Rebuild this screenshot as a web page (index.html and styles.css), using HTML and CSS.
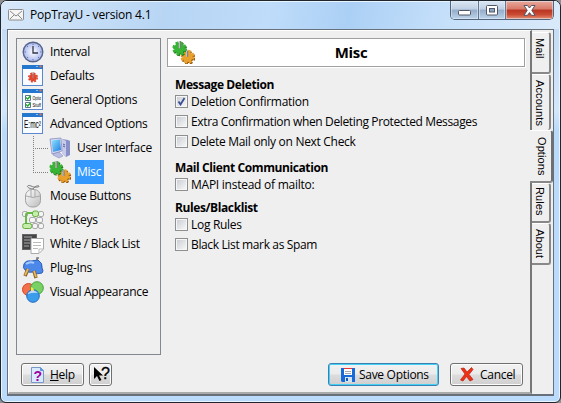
FILE: index.html
```
<!DOCTYPE html>
<html lang="en">
<head>
<meta charset="utf-8">
<title>PopTrayU - version 4.1</title>
<link rel="stylesheet" href="styles.css">
</head>
<body>
<svg class="defs" width="0" height="0" aria-hidden="true">
  <defs>
    <linearGradient id="blue" x2="1" y2="1"><stop stop-color="#8fe3ff"/><stop offset="1" stop-color="#217ce0"/></linearGradient>
    <radialGradient id="face"><stop stop-color="#fff"/><stop offset="1" stop-color="#a9b8ee"/></radialGradient>
    <linearGradient id="mouse" x2="1" y2="1"><stop stop-color="#fff"/><stop offset="1" stop-color="#bbb"/></linearGradient>
    <g id="frame"><rect x=".5" y=".5" width="20" height="20" fill="#f8fbff" stroke="#5b87cf"/><rect width="21" height="4" fill="#2477cf"/><path d="M14 1.500h2" stroke="#79c5fa"/><path d="M17.500 1.500h2" stroke="#f06a54" stroke-width="2"/></g>
    <g id="cog"><circle r="5" fill="currentColor"/><circle r="5.600" fill="none" stroke="currentColor" stroke-width="2.200" stroke-dasharray="2.600 1.800"/></g>
    <symbol id="gears" viewBox="0 0 22 22"><g transform="translate(15.500 16)" color="#95570d"><use href="#cog"/></g><g transform="translate(14.800 15)" color="#e9a02c"><use href="#cog"/></g><g transform="translate(7.800 8)" color="#247b23"><use href="#cog"/></g><g transform="translate(7 7)" color="#39b536"><use href="#cog"/></g><path d="M7.500 0v7M14.500 9v6" stroke="#777" stroke-width="2"/><path d="M7 0v7M14 9v6" stroke="#ccc"/></symbol>
  </defs>
</svg>
<div class="window">
  <header class="titlebar">
    <svg class="mail" width="16" height="12" viewBox="0 0 16 12"><rect x=".5" y=".5" width="15" height="10.500" rx="1" fill="#f5f5f5" stroke="#8c8c8c"/><path d="M2 2l6 5 6-5M2 10l4-4M14 10l-4-4" fill="none" stroke="#888"/></svg>
    <h1>PopTrayU - version 4.1</h1>
    <div class="controls">
      <span class="min"><svg width="13" height="6"><rect x=".5" y=".5" width="12" height="4.500" rx="1" fill="#fff" stroke="#535666"/></svg></span>
      <span class="max"><svg width="12" height="11"><rect x=".5" y=".5" width="11" height="9.500" rx="1" fill="#fff" stroke="#535666"/><rect x="3.500" y="3.500" width="5" height="3.500" fill="#8ba5c5" stroke="#535666"/></svg></span>
      <span class="close"><svg width="13" height="11" viewBox="0 0 13 11"><path d="M1 .5h3.500l2 2.500 2-2.500H12L8.800 5.300 12 10.300H8.500l-2-2.700-2 2.700H1l3.200-5z" fill="#fff" stroke="#535666"/></svg></span>
    </div>
  </header>
  <div class="client">
    <main class="page">
      <div class="body">
        <ul class="tree">
          <li><svg width="22" height="22"><circle cx="11" cy="11" r="9.800" fill="url(#face)" stroke="#56658f" stroke-width="1.400"/><path d="M11 5v7h5" fill="none" stroke="#303849" stroke-width="1.300"/><path d="M11 2.500v1.500M11 18v1.500M2.500 11H4M18 11h1.500M5 5l1 1M16 6l1-1M5 17l1-1M16 16l1 1" stroke="#67759e"/></svg><span>Interval</span></li>
          <li><svg width="22" height="22"><use href="#frame"/><g transform="translate(11 12.500) scale(.75)" color="#e1462f"><use href="#cog"/></g><path d="M11 7v6" stroke="#a88"/></svg><span>Defaults</span></li>
          <li><svg width="22" height="22"><use href="#frame"/><path d="M3.500 6.500h5v5h-5zM3.500 13.500h5v5h-5z" fill="#fff" stroke="#58758a"/><path d="M4 8.500l1.700 1.500L8.500 7M4 15.500l1.700 1.500L8.500 14" fill="none" stroke="#1aa729" stroke-width="1.400"/><text x="10.500" y="11" textLength="8.500" lengthAdjust="spacingAndGlyphs" class="tiny">Optio</text><text x="10.500" y="18" textLength="8.500" lengthAdjust="spacingAndGlyphs" class="tiny">Stuff</text></svg><span>General Options</span></li>
          <li><svg width="22" height="22"><use href="#frame"/><text x="2" y="15" textLength="17" lengthAdjust="spacingAndGlyphs" class="formula">E:mc²</text></svg><span>Advanced Options</span></li>
          <li class="children">
            <ul>
              <li><svg width="22" height="22"><path d="M13 2l6 1 2 1v14l-4 2-4-4z" fill="#8790c9"/><path d="M13 2l4 2v16l-4-4z" fill="#c8cbea"/><path d="M14 7l2 1M14 9l2 1" stroke="#5560a0"/><path d="M4 16l6-1 4 4-4 2-6-3z" fill="#b9bce3" stroke="#8e93c2" stroke-width=".6"/><path d="M1 2l11-1 1 13-10 3z" fill="#d6d9f2" stroke="#7d83b6" stroke-width=".7"/><path d="M2.500 3.500l8.500-1 1 10.500-8 2z" fill="url(#blue)"/></svg><span>User Interface</span></li>
              <li><svg width="22" height="22"><use href="#gears"/></svg><span class="selected">Misc</span></li>
            </ul>
          </li>
          <li><svg width="22" height="24" viewBox="0 0 22 24"><path d="M11 5C3 4 5 0 9 2c4 2 9 1 8 0s-6 1-6 4" fill="none" stroke="#777"/><rect x="3.500" y="5.500" width="15" height="17.500" rx="6.500" fill="url(#mouse)" stroke="#a1a1a1"/><path d="M4 12q7 3 14 0M9 6v7M13 6v7" fill="none" stroke="#aaa"/></svg><span>Mouse Buttons</span></li>
          <li><svg width="22" height="20"><g fill="#f5f5f5" stroke="#aaa"><rect x=".5" y="1.500" width="5" height="5" rx="1.500"/><rect x="16.500" y="1.500" width="5" height="5" rx="1.500"/><rect x="7.500" y="7.500" width="6" height="5" rx="1.500"/><rect x="14.500" y="7.500" width="6" height="5" rx="1.500"/><rect x="10.500" y="13.500" width="5" height="5" rx="1.500"/><rect x="16.500" y="13.500" width="5" height="5" rx="1.500"/></g><path d="M4 15V5q0-2 2-2h7" fill="none" stroke="#69b945" stroke-width="2"/><rect x="10.500" y="1" width="6" height="5.500" rx="2" fill="#c5eeaa" stroke="#62ad3d"/><rect x=".7" y="13.500" width="9" height="5" rx="2" fill="#c5eeaa" stroke="#62ad3d"/></svg><span>Hot-Keys</span></li>
          <li><svg width="22" height="20"><rect x=".5" y=".5" width="14" height="15" fill="#454545" stroke="#666"/><path d="M2 3h8M2 6h6M2 9h6M2 12h5" stroke="#aaa"/><path d="M9 4.500h12.500V15L17 19.500H9z" fill="#fff" stroke="#aaa"/><path d="M11 8.500h8M11 11.500h8M11 14.500h5M17 19v-4h4" fill="none" stroke="#bbb"/></svg><span>White / Black List</span></li>
          <li><svg width="22" height="22"><path d="M15 4V1h2" stroke="#777" stroke-width="1.600" fill="none"/><path d="M2 7q2-4 7-3l7-1q5 3 4 8 2 3 0 5-5 2-9-1-4 1-7-1Q0 11 2 7z" fill="#4c87ea" stroke="#2d5fba"/><path d="M4 7q4-3 8-1" stroke="#a5caff" stroke-width="2" fill="none"/><path d="M6 12l-3 7M12 14l2 7" stroke="#8e6424" stroke-width="3.500"/><path d="M6 12l-3 6M12 14l2 6" stroke="#e4b766" stroke-width="1.800"/></svg><span>Plug-Ins</span></li>
          <li><svg width="22" height="22"><circle cx="6.500" cy="8.500" r="6" fill="#f36e49" stroke="#d64424"/><circle cx="15" cy="7" r="6.300" fill="#79d064" stroke="#46a43b"/><circle cx="11" cy="15" r="6.300" fill="#3b9cec" stroke="#246cbf"/><path d="M9 6q3 1 3 4H9z" fill="#ffe33c"/><path d="M6 12q5-5 10 0-5-1-10 1z" fill="#c2d9ff"/></svg><span>Visual Appearance</span></li>
        </ul>
        <section class="panel">
          <div class="banner"><svg width="23" height="23"><use href="#gears"/></svg><h2>Misc</h2></div>
          <div class="settings">
            <h3>Message Deletion</h3>
            <label class="check"><i><svg width="9" height="9"><path d="M1.500 4.500L3.500 7.500 7.500 1" fill="none" stroke="#3b4f93" stroke-width="1.800"/></svg></i><span>Deletion Confirmation</span></label>
            <label class="check"><i></i><span class="long">Extra Confirmation when Deleting Protected Messages</span></label>
            <label class="check"><i></i><span>Delete Mail only on Next Check</span></label>
            <h3>Mail Client Communication</h3>
            <label class="check"><i></i><span class="mapi">MAPI instead of mailto:</span></label>
            <h3 class="rules-heading">Rules/Blacklist</h3>
            <label class="check"><i></i><span>Log Rules</span></label>
            <label class="check"><i></i><span class="long">Black List mark as Spam</span></label>
          </div>
        </section>
      </div>
      <footer>
        <button class="help"><svg width="13" height="16"><path d="M.5.500h9l3 3v12H.5z" fill="#d9eaff" stroke="#7998c8"/><path d="M9.500.500v3h3" fill="#6196dd" stroke="#6196dd"/><text x="2.500" y="13.500" class="qmark">?</text></svg><span><u>H</u>elp</span></button>
        <button class="what"><svg width="18" height="18"><path d="M1 1v12l3-3 2.500 5 2-1L6 9.500h4z"/><text x="8" y="13" class="query">?</text></svg></button>
        <button class="save"><svg width="14" height="14"><path d="M0 0h14v14H1l-1-1z" fill="#176bd9"/><path d="M3 0h8v7H3z" fill="#fff"/><path d="M3 .5h8" stroke="#e33"/><path d="M4 3.500h6M4 5.500h6" stroke="#aaa"/><path d="M4 9h7v5H4z" fill="#d5e4f4"/><path d="M5 10h2v3H5z" fill="#175ab4"/></svg><span>Save Options</span></button>
        <button class="cancel"><svg width="14" height="15"><path d="M1 1.500l3-.5 3 4L11.500.500l1.500 2L9 7.500l4 5-3 1.500-3.500-4.500L3 14l-2.500-1L5 7z" fill="#ed3218" stroke="#b71e0a" stroke-width=".7"/></svg><span>Cancel</span></button>
      </footer>
    </main>
    <nav class="tabs">
      <span class="tab mailtab">Mail</span>
      <span class="tab accounts">Accounts</span>
      <span class="tab active">Options</span>
      <span class="tab rules">Rules</span>
      <span class="tab about">About</span>
    </nav>
  </div>
</div>
</body>
</html>
```
FILE: styles.css
```
* { box-sizing: border-box; }
body { margin: 0; background: #8d8f91; font: 12px/16px "Open Sans", "Noto Sans", sans-serif; color: #000; letter-spacing: -.3px; white-space: nowrap; overflow: hidden; }
h1, h2, h3, ul { margin: 0; padding: 0; font-size: inherit; list-style: none; }
svg { display: block; flex: none; }
.defs { position: absolute; }
.window { width: 561px; height: 403px; border: 1px solid #20262d; border-radius: 7px 7px 6px 6px; padding: 0 6px; overflow: hidden; background: linear-gradient(#e4effa 0, #c5dcf4 28px, #d3e7fb 110px, #b9dafb 130px, #badbfc); box-shadow: inset 0 0 0 1px #e8f5ff; }
.titlebar { height: 28px; display: flex; margin: 0 -6px; padding-left: 7px; background: linear-gradient(100deg, #d7e8f9 0, #b7d5f4 30%, #bfdcfa 48%, #abd0f5 62%, #c6e0fa 80%, #d9eafa); box-shadow: inset 0 1px #e8f5ff; }
.mail { margin-top: 8px; }
.titlebar h1 { margin: 6px 0 0 6px; font-weight: 400; letter-spacing: -.2px; }
.controls { display: flex; margin: 0 6px 0 auto; height: 19px; border: 1px solid #53657c; border-top: 0; border-radius: 0 0 5px 5px; overflow: hidden; }
.controls span { display: flex; align-items: center; justify-content: center; background: linear-gradient(#dbe7f4, #bfd0e4 45%, #94acca 50%, #bdd3ea); box-shadow: inset 0 0 0 1px #e5f0fb88; border-right: 1px solid #63768e; }
.min { width: 28px; padding-top: 6px; }
.max { width: 27px; }
.controls .close { width: 47px; border: 0; background: linear-gradient(#e8aa9e, #d87967 45%, #b93522 50%, #c94a32 75%, #e59077); }
.client { height: 367px; width: 547px; border: 1px solid #68707a; border-bottom-width: 2px; background: #efefef; display: flex; }
.page { width: 524px; border: solid; border-width: 1px 2px 2px 1px; border-color: #fff #777 #aaa #fff; padding: 7px 4px 0 7px; }
.body { display: flex; gap: 6px; }
.tree { width: 145px; height: 317px; border: 1px solid #828790; padding: 1px 0 0 5px; }
.tree li { height: 24px; display: flex; align-items: center; gap: 6px; }
.tree .children { height: 48px; display: block; margin-left: 11px; background: repeating-linear-gradient(#808080 0 1px, transparent 1px 2px) 0 0 / 1px 36px no-repeat; }
.children li { padding-left: 16px; gap: 4px; background: repeating-linear-gradient(90deg, #808080 0 1px, transparent 1px 2px) 0 12px / 15px 1px no-repeat; }
.children span { height: 24px; padding: 4px 2px; }
.selected { width: 29px; background: #3399ff; color: #fff; }
.tiny { font: 5.5px "Liberation Sans", sans-serif; letter-spacing: 0; }
.formula { font: 10px "Liberation Sans", sans-serif; letter-spacing: 0; }
.panel { width: 358px; }
.banner { height: 29px; border: 1px solid #a0a0a0; background: #fff; box-shadow: 1px 1px #fff; display: flex; align-items: center; padding-left: 4px; }
.banner h2 { flex: 1; text-align: center; font-size: 15px; padding: 0 17px 2px 0; }
.settings { padding: 10px 0 0 8px; }
.settings h3 { height: 16px; margin-bottom: 1px; letter-spacing: -.4px; }
.check { height: 20px; display: flex; align-items: flex-start; gap: 3px; }
.check i { width: 13px; height: 13px; margin-top: 1px; border: 1px solid #8e8f8f; padding: 1px; background: linear-gradient(135deg, #cbcfd5, #f6f6f6) content-box, #f6f6f6; }
.check + h3 { margin-top: 6px; }
.check + .rules-heading { margin-top: 3px; }
.long { letter-spacing: -.36px; }
.mapi { letter-spacing: -.25px; }
footer { display: flex; margin: 8px 0 0 5px; }
button { display: flex; align-items: center; height: 23px; padding: 0; border: 1px solid #707070; border-radius: 3px; background: linear-gradient(#f2f2f2, #ebebeb 48%, #dddddd 52%, #cfcfcf); box-shadow: inset 0 0 0 1px #fcfcfc; font: inherit; letter-spacing: inherit; color: inherit; }
.help { width: 63px; padding-left: 9px; gap: 6px; }
.what { width: 23px; margin-left: 5px; padding-left: 3px; }
.save { width: 111px; margin-left: 216px; padding-left: 12px; gap: 4px; border-color: #3c7fb1; box-shadow: inset 0 0 0 1px #44d1f7; }
.cancel { width: 73px; margin-left: 11px; padding-left: 9px; gap: 6px; }
.qmark { font: bold 14px "Liberation Sans", sans-serif; fill: #a000a0; }
.query { font: 16px "Liberation Sans", sans-serif; stroke: #000; stroke-width: .3px; }
.tabs { width: 21px; padding-top: 2px; }
.tab { display: flex; align-items: flex-start; writing-mode: vertical-rl; width: 19px; padding: 5px 0 0; font: 11px/18px "Liberation Sans", sans-serif; letter-spacing: .1px; border: solid; border-width: 1px 2px 2px 0; border-color: #fff #888 #888; border-radius: 0 3px 3px 0; }
.mailtab { height: 42px; }
.accounts { height: 56px; border-bottom: 0; }
.tab.active { width: 23px; height: 53px; margin-left: -2px; padding: 6px 0 0; background: #efefef; border-color: #fff #707070 #888; }
.rules { height: 40px; padding-top: 3px; }
.about { height: 42px; }
```
